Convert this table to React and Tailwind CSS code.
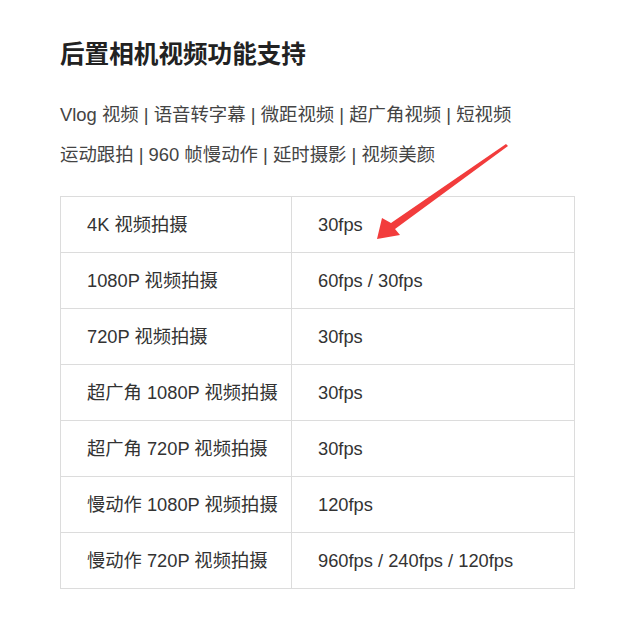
const rows = [
    ['4K 视频拍摄', '30fps'],
    ['1080P 视频拍摄', '60fps / 30fps'],
    ['720P 视频拍摄', '30fps'],
    ['超广角 1080P 视频拍摄', '30fps'],
    ['超广角 720P 视频拍摄', '30fps'],
    ['慢动作 1080P 视频拍摄', '120fps'],
    ['慢动作 720P 视频拍摄', '960fps / 240fps / 120fps'],
];

function Arrow() {
    // red annotation arrow drawn over the table
    return (
        <svg className="absolute left-0 top-0 pointer-events-none" width="640" height="619">
            <polygon
                points="506,144 391,223 382,218 377,239 400,235 395,229 508,146"
                fill="#f23c3c"
            />
        </svg>
    );
}

function App() {
    return (
        <div className="relative w-[640px] h-[619px] bg-white pl-[60px] pt-[39px]" style={{fontFamily: '"Liberation Sans", "Noto Sans CJK SC", sans-serif'}}>
            <h2 className="text-[24.6px] leading-[32px] font-bold text-[#222]">后置相机视频功能支持</h2>

            <div className="mt-[24px] text-[18.4px] leading-[40px] text-[#444]">
                <p>Vlog 视频 | 语音转字幕 | 微距视频 | 超广角视频 | 短视频</p>
                <p>运动跟拍 | 960 帧慢动作 | 延时摄影 | 视频美颜</p>
            </div>

            <table className="mt-[21px] w-[515px] border-collapse border border-[#dcdcdc] text-[18.3px] text-[#333]">
                <tbody>
                    {rows.map((r, i) => (
                        <tr key={i} className="h-[56px]">
                            <td className="w-[231px] border border-[#dcdcdc] pl-[26px]">{r[0]}</td>
                            <td className="border border-[#dcdcdc] pl-[26px]">{r[1]}</td>
                        </tr>
                    ))}
                </tbody>
            </table>

            <Arrow />
        </div>
    );
}

export default App;
